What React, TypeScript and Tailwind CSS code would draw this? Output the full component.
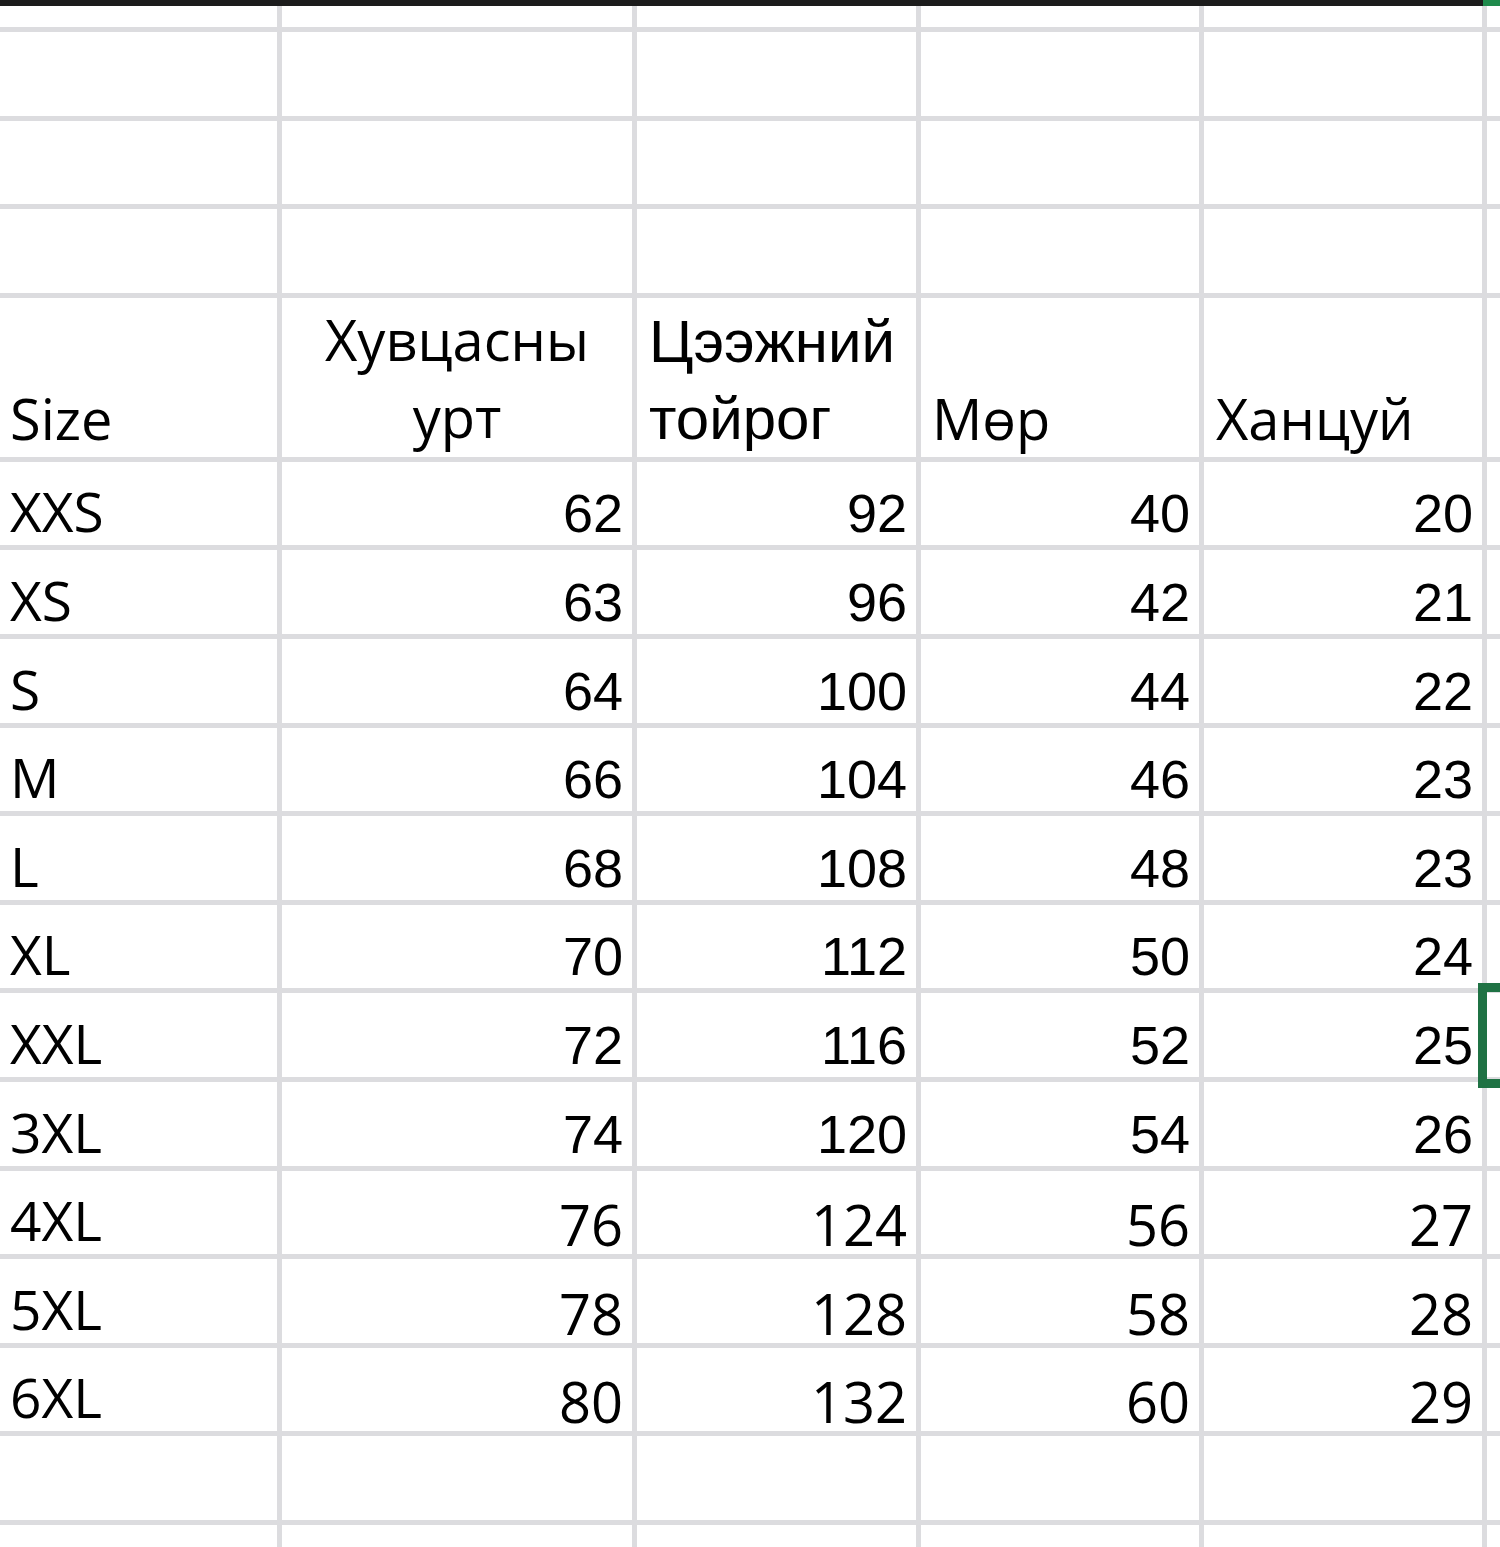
const ROWS: [string, number, number, number, number][] = [
  ['XXS', 62, 92, 40, 20],
  ['XS', 63, 96, 42, 21],
  ['S', 64, 100, 44, 22],
  ['M', 66, 104, 46, 23],
  ['L', 68, 108, 48, 23],
  ['XL', 70, 112, 50, 24],
  ['XXL', 72, 116, 52, 25],
  ['3XL', 74, 120, 54, 26],
  ['4XL', 76, 124, 56, 27],
  ['5XL', 78, 128, 58, 28],
  ['6XL', 80, 132, 60, 29],
];

const calibri = "font-['Open_Sans',sans-serif]";
const helv = "font-['Liberation_Sans',Arial,sans-serif]";

function Blank({ h }: { h: string }) {
  return (
    <>
      {Array.from({ length: 6 }).map((_, i) => (
        <div key={i} className={`bg-white ${h}`} />
      ))}
    </>
  );
}

export default function App() {
  return (
    <div className="relative w-[1500px] h-[1547px] overflow-hidden bg-white text-black">
      {/* top bar */}
      <div className="flex h-[6px] bg-[#1c1c1c]">
        <div className="flex-1" />
        <div className="w-[17px] bg-[#1f8a4c]" />
      </div>

      <div className="grid grid-cols-[277px_350px_279px_278px_278px_1fr] gap-[5px] bg-[#dcdcdf]">
        <Blank h="h-[21px]" />
        <Blank h="h-[83.6px]" />
        <Blank h="h-[83.6px]" />
        <Blank h="h-[83.6px]" />

        {/* header */}
        <div className={`bg-white h-[159px] flex items-end pl-[10px] pb-0 text-[56px] leading-[77px] ${calibri}`}>
          Size
        </div>
        <div className={`bg-white h-[159px] flex flex-col justify-end items-center pb-[2px] text-[56px] leading-[77px] ${calibri}`}>
          <span>Хувцасны</span>
          <span>урт</span>
        </div>
        <div className={`bg-white h-[159px] flex flex-col justify-end pl-[12px] pb-0 text-[60px] leading-[77px] ${helv}`}>
          <span>Цээжний</span>
          <span>тойрог</span>
        </div>
        <div className={`bg-white h-[159px] flex items-end pl-[11px] pb-0 text-[56px] leading-[77px] ${calibri}`}>
          Мөр
        </div>
        <div className={`bg-white h-[159px] flex items-end pl-[12px] pb-0 text-[56px] leading-[77px] ${calibri}`}>
          Ханцуй
        </div>
        <div className="bg-white h-[159px]" />

        {ROWS.map(([size, ...nums], r) => {
          const numFont = r >= 8 ? `${calibri} text-[56px] pb-[2px]` : `${helv} text-[54px] pb-[5px]`;
          return (
            <div key={size} className="contents">
              <div className={`bg-white h-[83.6px] flex items-end pl-[10px] pb-[7px] text-[55px] leading-none ${calibri}`}>
                {size}
              </div>
              {nums.map((n, i) => (
                <div
                  key={i}
                  className={`bg-white h-[83.6px] flex items-end justify-end pr-[9px] leading-none ${numFont}`}
                >
                  {n}
                </div>
              ))}
              <div className="bg-white h-[83.6px]" />
            </div>
          );
        })}

        <Blank h="h-[83.6px]" />
        <Blank h="h-[83.6px]" />
      </div>

      {/* selected cell */}
      <div className="absolute left-[1478px] top-[983px] w-[40px] h-[105px] border-[9px] border-[#1f7244]" />
    </div>
  );
}
